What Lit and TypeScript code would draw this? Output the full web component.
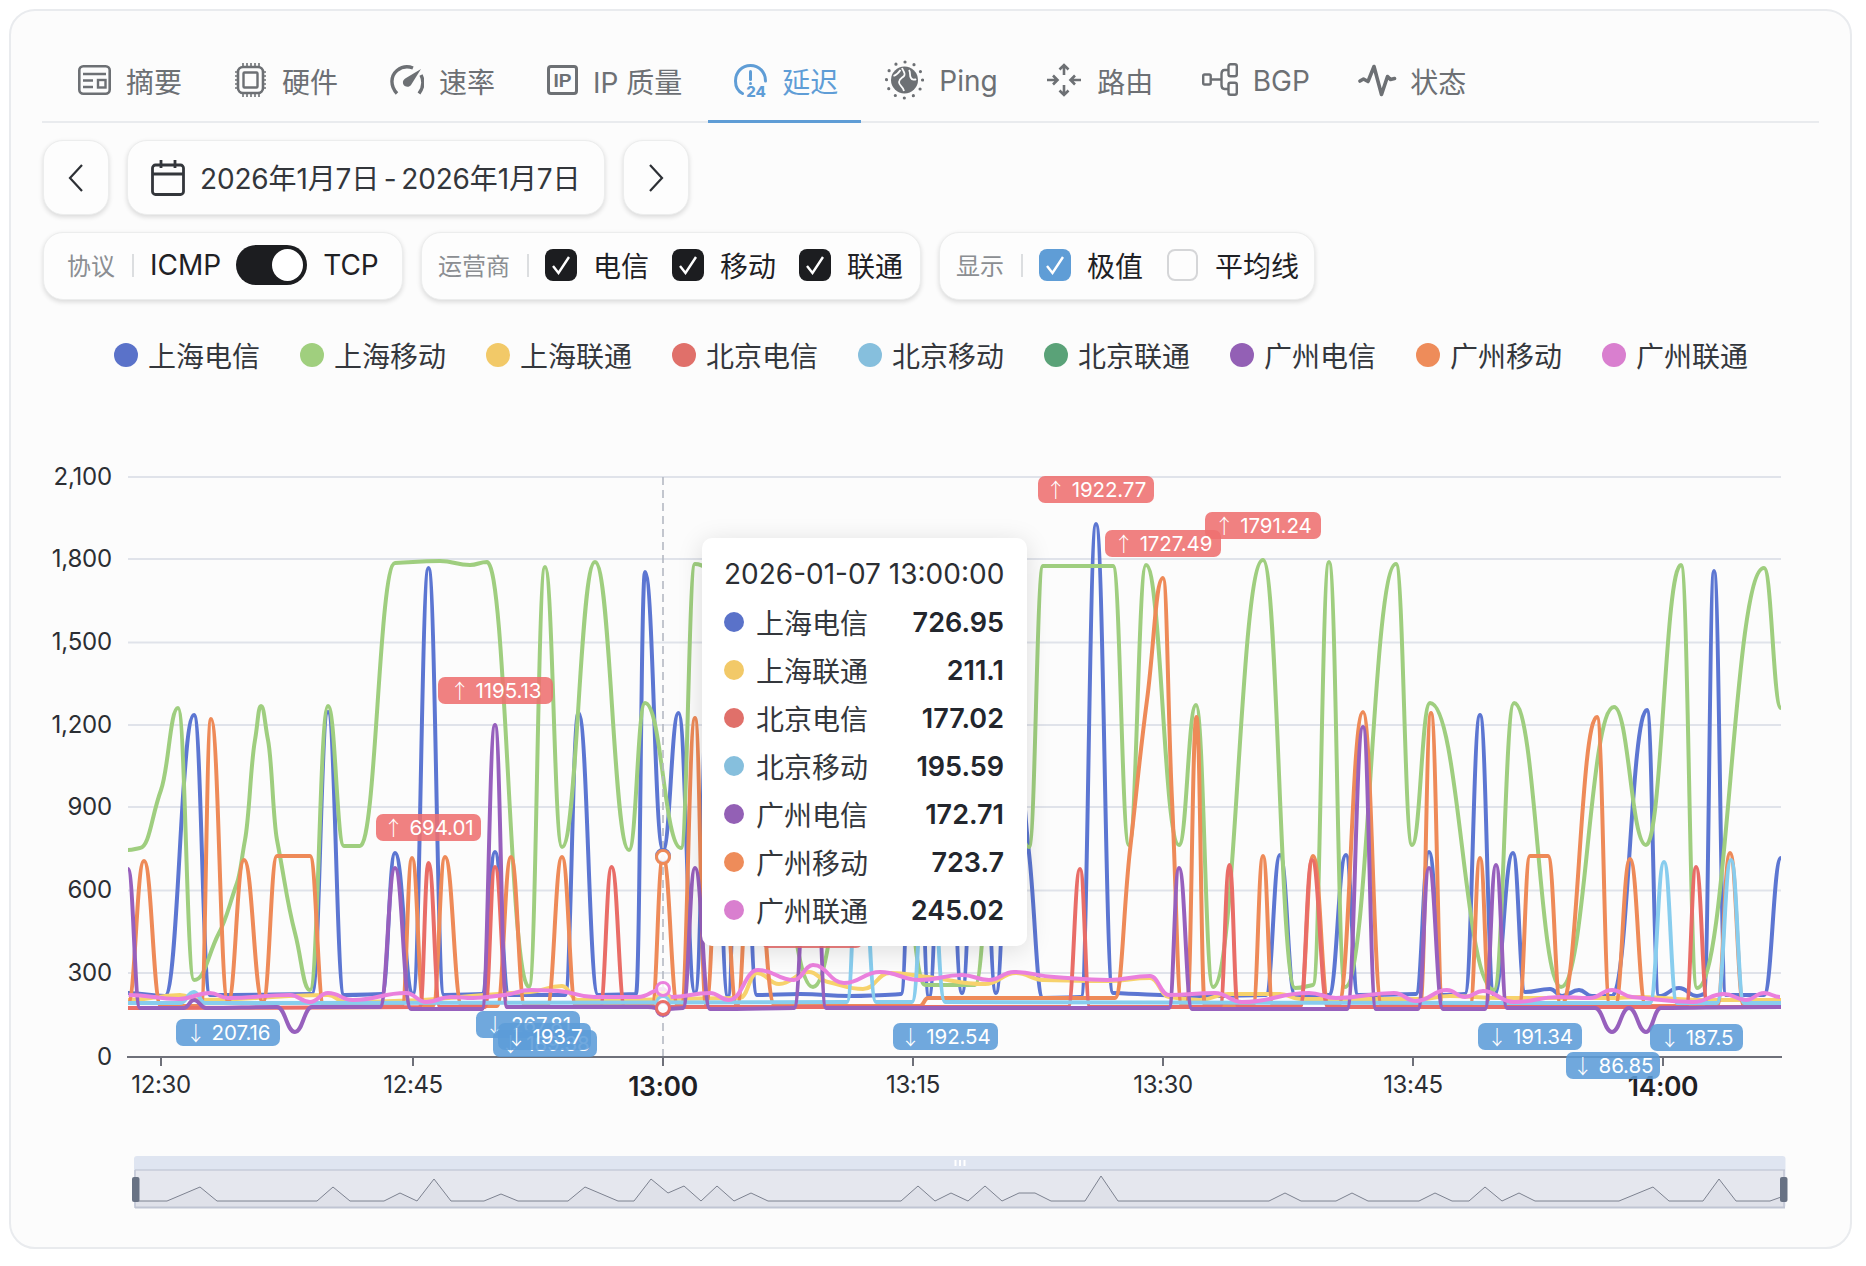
import { LitElement, html, css, svg } from "lit";
import { customElement } from "lit/decorators.js";

type P = [number, number];

const OX = 42;
const OY = 400;

function smooth(pts: P[]): string {
  const n = pts.length;
  const sec: number[] = [];
  for (let i = 0; i < n - 1; i++) sec.push((pts[i + 1][1] - pts[i][1]) / (pts[i + 1][0] - pts[i][0]));
  const m: number[] = new Array(n).fill(0);
  for (let i = 1; i < n - 1; i++) {
    if (sec[i - 1] * sec[i] > 0) {
      const s = Math.abs(sec[i - 1]) < Math.abs(sec[i]) ? sec[i - 1] : sec[i];
      m[i] = s;
    }
  }
  let d = `M${pts[0][0]} ${pts[0][1]}`;
  const k = 0.46;
  for (let i = 0; i < n - 1; i++) {
    const [x0, y0] = pts[i];
    const [x1, y1] = pts[i + 1];
    const dx = x1 - x0;
    d += `C${(x0 + k * dx).toFixed(1)} ${(y0 + m[i] * k * dx).toFixed(1)} ${(x1 - k * dx).toFixed(1)} ${(y1 - m[i + 1] * k * dx).toFixed(1)} ${x1} ${y1}`;
  }
  return d;
}

const BLUE: P[] = [[128,993],[165,996],[194,715],[210,995],[312,994],[328,712],[344,995],[382,994],[395,853],[413,994],[428.5,568],[444,995],[482,994],[495,852],[509,995],[565,995],[578.5,713],[598,995],[636,994],[645,572],[663,850],[678.5,713],[695,993],[711,600],[728,997],[740,650],[757,995],[800,994],[850,996],[885,995],[901,994],[915,650],[929,997],[945,650],[962,993],[979,650],[996,993],[1012,700],[1029,853],[1043,998],[1081,997],[1096,524],[1113,993],[1200,996],[1266,995],[1280,855],[1295,995],[1329,995],[1346,855],[1358,995],[1416,994],[1429,852],[1443,995],[1465,994],[1480,715],[1494,995],[1513,853],[1525,992],[1550,989],[1562,996],[1579,990],[1592,996],[1612,996],[1647,710],[1659,996],[1679,988],[1697,996],[1704,994],[1714,571],[1726,995],[1764,995],[1781,858]];
const GREEN: P[] = [[128,850],[140,848],[161,790],[178,708],[194,980],[219,933],[237,883],[245,840],[255,740],[261,706],[268,740],[277,840],[295,933],[310,990],[328,706],[344,846],[360,846],[395,563],[440,561],[470,565],[487,562],[529,987],[545,567],[562,847],[595,562],[629,850],[645,703],[681,848],[695,564],[760,700],[813,987],[868,700],[890,700],[925,985],[975,985],[1000,700],[1029,847],[1043,566],[1113,566],[1129,845],[1146,565],[1179,845],[1196,705],[1213,987],[1263,560],[1295,988],[1313,985],[1329,562],[1345,987],[1396,564],[1412,845],[1430,703],[1494,990],[1514,703],[1561,987],[1614,707],[1646,845],[1681,565],[1697,988],[1764,568],[1781,708]];
const YELLOW: P[] = [[128,1000],[180,995],[200,1000],[328,995],[345,1002],[530,992],[562,986],[578,1000],[640,1000],[663,999],[740,998],[757,973],[779,984],[809,972],[828,982],[863,989],[890,973],[928,977],[985,984],[1016,973],[1043,980],[1108,981],[1150,978],[1169,997],[1200,1000],[1228,994],[1280,994],[1300,999],[1420,999],[1450,996],[1500,998],[1610,998],[1640,997],[1700,1000],[1781,1000]];
const ORANGE: P[] = [[128,1003],[144,861],[161,1006],[201,1006],[211,719],[228,1002],[244,860],[263,1002],[277,856],[310,856],[324,1006],[402,1006],[412,858],[424,1006],[433,1006],[445,857],[462,1006],[497,1006],[511,857],[525,1006],[547,1006],[562,857],[576,1006],[652,1006],[663,857],[678,1006],[681,1006],[695,718],[706,1004],[720,800],[737,1006],[752,800],[775,1006],[920,1006],[928,998],[1115,998],[1130,850],[1147,700],[1163,578],[1172,800],[1182,1006],[1187,1006],[1196.5,717],[1205,1006],[1253,1006],[1263,856],[1273,1006],[1300,1006],[1313,856],[1329,1006],[1338,1006],[1363,712],[1382,1006],[1420,1006],[1431,713],[1443,1006],[1470,1006],[1480,858],[1490,1006],[1519,1006],[1530,856],[1548,856],[1561,1006],[1597,717],[1610,1006],[1615,1006],[1630,859],[1646,1006],[1717,1006],[1730,853],[1744,1006],[1781,1006]];
const RED: P[] = [[128,1008],[420,1007],[428.5,863],[440,1007],[485,1007],[495,867],[508,1007],[600,1007],[611.6,867],[625,1007],[1068,1007],[1080,869],[1090,1007],[1220,1007],[1229.5,865],[1238,1007],[1300,1007],[1312,860],[1328,1007],[1686,1007],[1696,867],[1708,1007],[1781,1007]];
const SKY: P[] = [[128,1003],[180,1003],[194,992],[205,1003],[847,1002],[860,800],[876,1002],[912,1002],[928,800],[945,1002],[1650,1003],[1664,862],[1677,1003],[1717,1003],[1731,860],[1744,1003],[1781,1003]];
const PURPLE: P[] = [[128,869],[140,1008],[184,1008],[194,1000],[206,1008],[277,1007],[295,1032],[312,1007],[380,1007],[395,868],[411,1009],[482,1009],[495,725],[507,1007],[648,1007],[663,1009],[683,1008],[695,868],[710,1009],[794,1008],[812,700],[826,1008],[1169,1008],[1179,868],[1192,1009],[1347,1009],[1363,727],[1376,1009],[1418,1009],[1429,868],[1443,1009],[1485,1009],[1496,865],[1507,1008],[1595,1008],[1612,1032],[1629,1008],[1646,1032],[1661,1008],[1781,1007]];
const PINK: P[] = [[128.6,995],[178.6,999],[210,993],[228,998],[290,995],[310,1002],[328,993],[353,1000],[406,993],[426,1002],[451,997],[473,998],[504,995],[531,990],[558,991],[594,997],[638,997],[663,989],[671,997],[710,993],[729,1000],[758,970],[794,980],[813,965],[844,983],[880,972],[920,980],[962,975],[989,980],[1014,972],[1054,977],[1108,980],[1150,976],[1169,995],[1215,993],[1242,1002],[1309,993],[1336,998],[1394,993],[1416,1001],[1447,990],[1465,997],[1483,991],[1514,1002],[1559,997],[1590,998],[1612,990],[1632,997],[1693,1002],[1724,994],[1746,1000],[1764,993],[1780,997]];

const LINES: [P[], string][] = [
  [BLUE, "#5c76d2"], [GREEN, "#9fce7f"], [YELLOW, "#f7d26c"], [ORANGE, "#ee8a58"],
  [RED, "#e96d67"], [SKY, "#88cdee"], [PURPLE, "#9760bd"], [PINK, "#ea80dd"],
];

const MARKERS: [number, string][] = [
  [856, "#5c76d2"], [999, "#f7d26c"], [1003, "#88cdee"], [1009, "#9760bd"],
  [1008, "#e96d67"], [857, "#ee8a58"], [989, "#ea80dd"],
];

const MINI_PTS: P[] = [[135,1201],[167,1201],[200,1187],[217,1201],[317,1201],[333,1187],[350,1201],[384,1201],[400,1193],[417,1201],[434,1179],[451,1201],[484,1201],[501,1194],[518,1201],[568,1201],[585,1187],[618,1201],[634,1201],[651,1179],[668,1193],[684,1186],[701,1201],[717,1186],[734,1201],[751,1193],[768,1201],[901,1201],[918,1186],[935,1201],[951,1193],[968,1201],[985,1186],[1002,1201],[1019,1193],[1035,1193],[1051,1201],[1085,1201],[1101,1176],[1118,1201],[1269,1201],[1285,1193],[1301,1201],[1336,1201],[1352,1193],[1368,1201],[1419,1201],[1435,1193],[1452,1201],[1469,1201],[1485,1187],[1502,1201],[1519,1193],[1535,1201],[1619,1201],[1653,1187],[1669,1201],[1703,1201],[1719,1179],[1736,1201],[1770,1201],[1784,1196]];

const LABELS: [string, string, string, number, number, number][] = [
  ["up", "↑", "1195.13", 438, 677, 115],
  ["up", "↑", "694.01", 376, 814, 105],
  ["up", "↑", "1922.77", 1038, 476, 116],
  ["up", "↑", "1791.24", 1205, 512, 116],
  ["up", "↑", "1727.49", 1105, 530, 116],
  ["up", "", "", 761, 921, 102],
  ["down", "↓", "207.16", 176, 1019, 104],
  ["down", "↓", "267.81", 476, 1011, 104],
  ["down", "↓", "189.38", 493, 1030, 104],
  ["down", "↓", "193.7", 498, 1023, 93],
  ["down", "↓", "192.54", 893, 1023, 105],
  ["down", "↓", "191.34", 1478, 1023, 104],
  ["down", "↓", "187.5", 1650, 1024, 93],
  ["down", "↓", "86.85", 1566, 1052, 94],
];

const LEGEND: [string, string][] = [
  ["上海电信", "#5a72c9"], ["上海移动", "#a0cf7e"], ["上海联通", "#f2c968"],
  ["北京电信", "#e0706a"], ["北京移动", "#86bfdd"], ["北京联通", "#5aa278"],
  ["广州电信", "#9360b5"], ["广州移动", "#ee8c5a"], ["广州联通", "#d97fcf"],
];

const TIP: [string, string, string][] = [
  ["上海电信", "#5a72c9", "726.95"], ["上海联通", "#f2c968", "211.1"], ["北京电信", "#e0706a", "177.02"],
  ["北京移动", "#86bfdd", "195.59"], ["广州电信", "#9360b5", "172.71"], ["广州移动", "#ee8c5a", "723.7"],
  ["广州联通", "#d97fcf", "245.02"],
];

const YTICKS: [string, number][] = [["2,100", 477], ["1,800", 559], ["1,500", 642.5], ["1,200", 725], ["900", 807], ["600", 890.5], ["300", 973], ["0", 1057]];
const XTICKS: [string, number, boolean][] = [["12:30", 161, false], ["12:45", 413, false], ["13:00", 663, true], ["13:15", 913, false], ["13:30", 1163, false], ["13:45", 1413, false], ["14:00", 1663, true]];

const icons = {
  summary: svg`<svg class="ic" width="33" height="30" viewBox="0 0 33 30"><rect x="1.300" y="1.300" width="30.400" height="27.400" rx="4" stroke-width="2.600"/><path stroke-width="2.400" d="M5 9h23M5 15.500h10M5 22h10"/><rect x="20" y="15" width="7.500" height="7.500" stroke-width="2.400"/></svg>`,
  cpu: svg`<svg class="ic" width="33" height="36" viewBox="0 0 33 36"><rect x="4" y="5" width="25" height="26" rx="5" stroke-width="2.600"/><rect x="9.500" y="10.500" width="14" height="15" rx="1" stroke-width="2.400"/><path stroke-width="1.600" d="M1 10h3M1 14h3M1 18h3M1 22h3M1 26h3M29 10h3M29 14h3M29 18h3M29 22h3M29 26h3M9 1v4M13 1v4M17 1v4M21 1v4M25 1v4M9 31v4M13 31v4M17 31v4M21 31v4M25 31v4"/></svg>`,
  gauge: svg`<svg class="ic" width="34" height="30" viewBox="0 0 34 30"><path stroke-width="3.400" d="M7 28.500C0 21 0.500 11 7 5.500 12 1.500 18 1 23 3M31 10c3 6 2 13-2 18.500"/><path class="fl" stroke="none" d="M31 4 21 20c-2 3-7 2-8-1.500-.6-2.500 1-4.500 3-5.500z"/></svg>`,
  ip: svg`<svg class="ic" width="31" height="30" viewBox="0 0 31 30"><rect x="1.500" y="1.500" width="28" height="27" rx="2.500" stroke-width="3"/><text class="ict" x="15.500" y="22" text-anchor="middle">IP</text></svg>`,
  clock: svg`<svg class="ic act" width="33" height="34" viewBox="0 0 33 34"><path stroke-width="3" stroke-linecap="round" d="M8.500 30.500C3.500 28 1.500 23 1.500 18 1.500 9 8 2.500 16.500 2.500S31.500 9 31.500 18"/><path stroke-width="3" stroke-linecap="round" d="M16.500 8.500v8"/><circle class="fl" stroke="none" cx="16.500" cy="20.500" r="1.500"/><text class="ict24" x="22" y="33.500" text-anchor="middle">24</text></svg>`,
  ping: svg`<svg class="ic" width="39" height="40" viewBox="0 0 39 40"><circle class="fl" stroke="none" cx="19.500" cy="20" r="13.500"/><path stroke="#fcfcfc" stroke-width="1.800" d="M8.500 16c3-1 5-3 7-6M17 8c1 3 4 5 2 8-2 2-5 3-5 6 0 4 4 4 5 9M24 10c2 3 0 5 2 8 1 2 4 2 5 1"/><circle cx="19.500" cy="20" r="18" stroke-width="3.200" stroke-dasharray="0 9.425" stroke-linecap="round"/></svg>`,
  route: svg`<svg class="ic" width="36" height="34" viewBox="0 0 36 34"><path stroke-width="2.600" d="M18 2v10M13.500 6.500 18 2l4.500 4.500M18 22v10M13.500 27.500 18 32l4.500-4.500M1 17h10M7 12.500l4.500 4.500L7 21.500M35 17H25M29 12.500l-4.500 4.500 4.500 4.500"/></svg>`,
  bgp: svg`<svg class="ic" width="36" height="33" viewBox="0 0 36 33"><rect x="1.200" y="11.500" width="7.500" height="10" rx="1.500" stroke-width="2.400"/><rect x="26.500" y="1.200" width="8.300" height="12" rx="2" stroke-width="2.400"/><rect x="26.500" y="19.800" width="8.300" height="12" rx="2" stroke-width="2.400"/><path stroke-width="2.400" d="M8.500 16.500h11M19.500 11c0-3 1-4 3-4h4M19.500 22c0 3 1 4 3 4h4M19.500 11v11"/></svg>`,
  pulse: svg`<svg class="ic" width="39" height="34" viewBox="0 0 39 34"><path stroke-width="3.600" stroke-linejoin="round" stroke-linecap="round" d="M2 18l3.500-2 4.500 2.500 6-15 7.500 28 6-18 3 3 4-1"/></svg>`,
};

const TABS: [unknown, string, boolean][] = [
  [icons.summary, "摘要", false], [icons.cpu, "硬件", false], [icons.gauge, "速率", false],
  [icons.ip, "IP 质量", false], [icons.clock, "延迟", true], [icons.ping, "Ping", false],
  [icons.route, "路由", false], [icons.bgp, "BGP", false], [icons.pulse, "状态", false],
];

const TIGHT = new Set(["Ping", "路由", "BGP", "状态"]);

@customElement("app-root")
export class AppRoot extends LitElement {
  static styles = css`
    :host { display: block; width: 1866px; height: 1266px; box-sizing: border-box; padding: 9px 14px 17px 9px; background: #fff;
      font-family: Inter, "Noto Sans CJK SC", sans-serif; color: #26282c; overflow: hidden; }
    .card { box-sizing: border-box; height: 1240px; border: 2px solid #e9ebee; border-radius: 26px; background: #fcfcfc; padding: 0 31px; }
    .tabs { box-sizing: border-box; height: 112px; display: flex; padding: 0 0 0 10px; border-bottom: 2px solid #e9ebee; }
    .tab { display: flex; align-items: center; gap: 15px; padding: 30px 26px 0; font-size: 28px; color: #6d7074; margin-bottom: -2px; height: 112px; box-sizing: border-box; border-bottom: 3px solid transparent; white-space: nowrap; }
    .tab .ic { margin-top: -2px; }
    .tab.active { color: #5f9dd6; border-bottom-color: #5f9dd6; }
    .tab.next { padding-right: 23px; }
    .tab.tight { padding-left: 24px; padding-right: 24.500px; }
    .tab.last { gap: 13px; }
    .ic { fill: none; stroke: #6d7074; stroke-width: 2.200; flex: none; }
    .ic .fl { fill: #6d7074; }
    .ic.act { stroke: #5f9dd6; }
    .ic.act .fl { fill: #5f9dd6; }
    .ict { font: 700 19px "Liberation Sans", sans-serif; fill: #6d7074; stroke: none; }
    .ict24 { font: 800 15px Inter, sans-serif; fill: #5f9dd6; stroke: none; }
    .row { display: flex; gap: 18px; padding-left: 1px; }
    .dates { margin-top: 17px; height: 75px; }
    .box { box-sizing: border-box; background: #fdfdfd; border: 1px solid #eceded; border-radius: 20px; box-shadow: 0 2px 5px rgba(0,0,0,.14); display: flex; align-items: center; }
    .nav { width: 66px; justify-content: center; }
    .nav svg { fill: none; stroke: #2d3035; stroke-width: 2.200; }
    .date { width: 478px; padding: 0 0 2px 23px; gap: 15px; font-size: 28px; color: #33363b; letter-spacing: -.15px; word-spacing: -3px; white-space: nowrap; }
    .date svg { fill: none; stroke: #33363b; stroke-width: 2.800; flex: none; margin-top: 2px; }
    .filters { margin-top: 17px; height: 68px; }
    .group { padding: 0 0 2px 23px; font-size: 28px; color: #1f2125; white-space: nowrap; }
    .g1 { width: 360px; }
    .g2 { width: 500px; padding-left: 16px; }
    .g3 { width: 376px; padding-left: 16px; }
    .cap { font-size: 24px; color: #8b8e92; margin-top: -2px; }
    .div { width: 2px; height: 23px; background: #dcdee0; margin: 0 16px 0 17px; }
    .switch { width: 71px; height: 40px; border-radius: 20px; background: #1c1d20; margin: 0 16px 0 15px; display: flex; align-items: center; justify-content: flex-end; padding-right: 4px; box-sizing: border-box; flex: none; }
    .knob { width: 31px; height: 32px; border-radius: 50%; background: #fff; }
    .chk { width: 32px; height: 32px; border-radius: 8px; background: #1c1d20; flex: none; margin-right: 16px; display: flex; align-items: center; justify-content: center; box-sizing: border-box; }
    .chk svg { fill: none; stroke: #fff; stroke-width: 2.400; }
    .chk.blue { background: #5f9dd6; margin-right: 16px; }
    .chk.off { background: #fdfdfd; border: 2px solid #d5d6d8; width: 31px; margin-right: 17px; }
    .item { margin-right: 23px; }
    .g3 .item { margin-right: 24px; }
    .legend { margin-top: 41px; height: 28px; display: flex; padding-left: 72px; font-size: 28px; color: #34373c; }
    .lg { width: 186px; display: flex; align-items: center; gap: 10px; flex: none; white-space: nowrap; }
    .dot { width: 24px; height: 24px; border-radius: 50%; flex: none; }
    .chart { position: relative; margin-top: 31px; height: 820px; width: 1790px; }
    .chart > svg { display: block; }
    .yl { font-size: 24px; fill: #2b2e33; text-anchor: end; font-family: Inter, sans-serif; letter-spacing: -.2px; }
    .xl { font-size: 24px; fill: #2b2e33; text-anchor: middle; font-family: Inter, sans-serif; letter-spacing: -.4px; }
    .xl.b { font-size: 26.500px; font-weight: 600; fill: #1f2125; }
    .lab { position: absolute; height: 27px; border-radius: 7px; color: #fff; font-size: 20.500px; letter-spacing: -.1px; display: flex; align-items: center; justify-content: center; gap: 6px; box-sizing: border-box; white-space: nowrap; }
    .lab.up { background: rgba(238,112,112,.88); }
    .lab.down { background: rgba(92,156,216,.88); }
    .arr { font-size: 20px; font-weight: 300; font-family: "Noto Sans CJK SC", sans-serif; line-height: 27px; }
    .tip { position: absolute; left: 660px; top: 138px; width: 325px; height: 408px; background: #fff; border-radius: 10px; box-shadow: 0 4px 26px rgba(0,0,0,.13); box-sizing: border-box; padding: 19px 23px 0 22px; }
    .tt { font-size: 28px; color: #2b2e33; height: 34px; line-height: 34px; margin-bottom: 7px; white-space: nowrap; text-align: right; }
    .tr { height: 48px; display: flex; align-items: center; font-size: 28px; color: #34373c; }
    .tr .dot { width: 20px; height: 20px; margin-right: 12px; }
    .tr b { margin-left: auto; font-weight: 600; font-size: 27px; color: #23262d; }
  `;

  render() {
    return html`<div class="card">
      <nav class="tabs">
        ${TABS.map(([ic, t, a]) => html`<div class="tab ${a ? "active" : ""} ${TIGHT.has(t) ? "tight" : ""} ${t === "延迟" ? "next" : ""} ${t === "状态" ? "last" : ""}">${ic}<span>${t}</span></div>`)}
      </nav>
      <div class="row dates">
        <div class="box nav"><svg width="16" height="28" viewBox="0 0 16 28"><path d="M14 1 2 14l12 13"/></svg></div>
        <div class="box date">
          <svg width="34" height="37" viewBox="0 0 34 37"><rect x="1.500" y="6" width="31" height="29.500" rx="3"/><path d="M1.500 15h31M10 1v8M24 1v8"/></svg>
          <span>2026年1月7日 - 2026年1月7日</span>
        </div>
        <div class="box nav"><svg width="16" height="28" viewBox="0 0 16 28"><path d="M2 1l12 13L2 27"/></svg></div>
      </div>
      <div class="row filters">
        <div class="box group g1"><span class="cap">协议</span><i class="div"></i><span>ICMP</span><div class="switch"><div class="knob"></div></div><span>TCP</span></div>
        <div class="box group g2"><span class="cap">运营商</span><i class="div"></i>${this.chk("")}<span class="item">电信</span>${this.chk("")}<span class="item">移动</span>${this.chk("")}<span>联通</span></div>
        <div class="box group g3"><span class="cap">显示</span><i class="div"></i>${this.chk("blue")}<span class="item">极值</span><div class="chk off"></div><span>平均线</span></div>
      </div>
      <div class="legend">${LEGEND.map(([t, c]) => html`<div class="lg"><span class="dot" style="background:${c}"></span>${t}</div>`)}</div>
      <div class="chart">
        ${this.plot()}
        ${LABELS.map(([k, a, t, x, y, w]) => html`<div class="lab ${k}" style="left:${x - OX}px;top:${y - OY}px;width:${w}px"><span class="arr">${a}</span><span>${t}</span></div>`)}
        <div class="tip">
          <div class="tt">2026-01-07 13:00:00</div>
          ${TIP.map(([t, c, v]) => html`<div class="tr"><span class="dot" style="background:${c}"></span>${t}<b>${v}</b></div>`)}
        </div>
      </div>
    </div>`;
  }

  chk(k: string) {
    return html`<div class="chk ${k}"><svg width="20" height="20" viewBox="0 0 20 20"><path d="M2 11l5.500 7L18 2"/></svg></div>`;
  }

  plot() {
    const mini = MINI_PTS.map((p) => `${p[0]},${p[1]}`).join(" ");
    return html`<svg width="1790" height="820" viewBox="${OX} ${OY} 1790 820">
      ${YTICKS.slice(0, 7).map(([, y]) => svg`<line x1="128" x2="1781" y1=${y} y2=${y} stroke="#e0e3ea" stroke-width="2"/>`)}
      ${YTICKS.map(([t, y]) => svg`<text class="yl" x="112" y=${y + 7.500}>${t}</text>`)}
      ${LINES.map(([p, c]) => svg`<path d=${smooth(p)} fill="none" stroke=${c} stroke-width="4"/>`)}
      <line x1="663" x2="663" y1="477" y2="1057" stroke="#b4b8c2" stroke-width="1.600" stroke-dasharray="8 5"/>
      ${MARKERS.map(([y, c]) => svg`<circle cx="663" cy=${y} r="6.500" fill="#fff" fill-opacity=".75" stroke=${c} stroke-width="3"/>`)}
      <line x1="127" x2="1782" y1="1057" y2="1057" stroke="#6e7079" stroke-width="2.200"/>
      ${XTICKS.map(([, x]) => svg`<line x1=${x} x2=${x} y1="1057" y2="1066" stroke="#6e7079" stroke-width="2"/>`)}
      ${XTICKS.map(([t, x, b]) => svg`<text class="xl ${b ? "b" : ""}" x=${x} y=${b ? 1095.500 : 1093}>${t}</text>`)}
      <rect x="134" y="1156" width="1651.500" height="52" rx="3" fill="#dfe5f1"/>
      <rect x="135" y="1170" width="1650" height="38" fill="#e5e7ee"/>
      <polygon points="135,1208 ${mini} 1785,1208" fill="#dfe1e9"/>
      <polyline points=${mini} fill="none" stroke="#7d8290" stroke-width="1"/>
      <line x1="135" x2="1785" y1="1170" y2="1170" stroke="#c6cbd8" stroke-width="1.500"/>
      <line x1="135" x2="1785" y1="1207.500" y2="1207.500" stroke="#c0c5d3" stroke-width="2"/>
      <line x1="135" x2="135" y1="1170" y2="1208" stroke="#c0c5d3" stroke-width="1.500"/>
      <line x1="1784" x2="1784" y1="1170" y2="1208" stroke="#c0c5d3" stroke-width="1.500"/>
      <rect x="132" y="1177" width="7.500" height="25" rx="2" fill="#687284"/>
      <rect x="1780" y="1177" width="7.500" height="25" rx="2" fill="#687284"/>
      <path d="M955.500 1160v6M960 1160v6M964.500 1160v6" stroke="#fff" stroke-width="2"/>
    </svg>`;
  }
}
